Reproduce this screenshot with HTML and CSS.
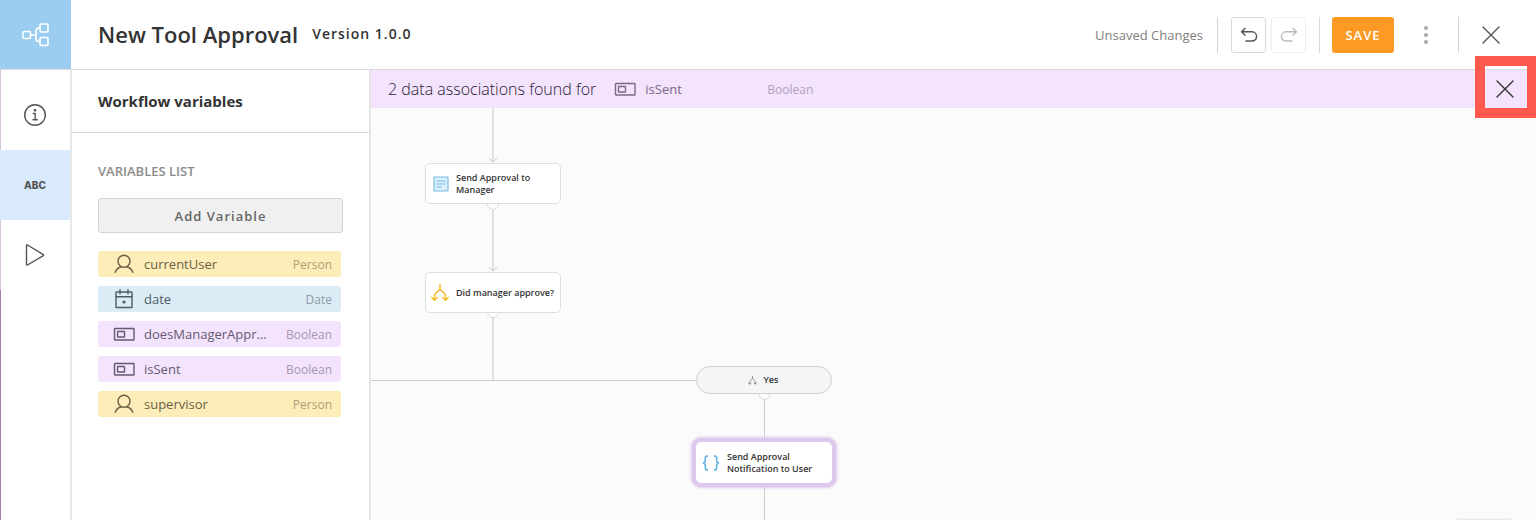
FILE: index.html
```html
<!DOCTYPE html>
<html lang="en">
<head>
    <meta charset="UTF-8">
    <meta name="viewport" content="width=device-width, initial-scale=1.0">
    <title>New Tool Approval</title>
    <link rel="stylesheet" href="styles.css">
</head>
<body>
    <!-- Shared icons -->
    <svg class="icon-defs" aria-hidden="true">
        <symbol id="icon-person" viewBox="0 0 20 20">
            <circle cx="10" cy="7.2" r="6"/>
            <path d="M1.2 18.3C2.4 15 4.8 13.4 7.4 12.8M18.8 18.3C17.6 15 15.2 13.4 12.6 12.8"/>
        </symbol>
        <symbol id="icon-date" viewBox="0 0 20 20">
            <rect x="2" y="3" width="16" height="15.5" rx="0.5"/>
            <path d="M2 7.7h16M6 0.8v4M14 0.8v4"/>
            <circle cx="10" cy="13" r="0.9" fill="currentColor"/>
        </symbol>
        <symbol id="icon-boolean" viewBox="0 0 22 14">
            <rect x="1.5" y="1.5" width="19.5" height="11.5" rx="0.5"/>
            <rect x="4.5" y="4.5" width="7" height="5.5" rx="0.5"/>
        </symbol>
        <symbol id="icon-close" viewBox="0 0 18 18">
            <path d="M1 1l16 16M17 1L1 17"/>
        </symbol>
        <symbol id="icon-split" viewBox="0 0 18 18">
            <path d="M9 0.5V5M9 5C8.5 7.5 3.5 7.5 3.5 12V16M9 5C9.5 7.5 14.5 7.5 14.5 12V16M0.7 13.3L3.5 16.5L6.3 13.3M11.7 13.3L14.5 16.5L17.3 13.3"/>
        </symbol>
    </svg>

    <header class="topbar">
        <a href="#" class="logo" aria-label="Workflows">
            <svg width="28" height="24" viewBox="0 0 28 24">
                <rect x="1" y="8.5" width="7.5" height="7" rx="1"/>
                <rect x="18" y="1" width="8" height="8" rx="1"/>
                <rect x="18" y="14.5" width="8" height="8" rx="1"/>
                <path d="M8.5 12H14M18 5H17C15 5 14 6 14 8V15.5C14 17.5 15 18.5 17 18.5H18"/>
            </svg>
        </a>
        <div class="title">
            <h1>New Tool Approval</h1>
            <span class="version">Version 1.0.0</span>
        </div>
        <div class="actions">
            <span class="status">Unsaved Changes</span>
            <div class="history">
                <button type="button" class="btn-icon" aria-label="Undo">
                    <svg width="18" height="16" viewBox="0 0 18 16"><path d="M5.5 1L1.5 4.8L5.5 8.6M1.5 4.8H12A4.6 4.6 0 0 1 12 14H5.5"/></svg>
                </button>
                <button type="button" class="btn-icon" aria-label="Redo" disabled>
                    <svg width="18" height="16" viewBox="0 0 18 16"><path d="M12.5 1L16.5 4.8L12.5 8.6M16.5 4.8H6A4.6 4.6 0 0 0 6 14H12.5"/></svg>
                </button>
            </div>
            <button type="button" class="btn-save">SAVE</button>
            <button type="button" class="btn-plain btn-more" aria-label="More">
                <svg width="6" height="20" viewBox="0 0 6 20"><circle cx="3" cy="3" r="2"/><circle cx="3" cy="10" r="2"/><circle cx="3" cy="17" r="2"/></svg>
            </button>
            <div class="close-wrap">
                <button type="button" class="btn-plain" aria-label="Close">
                    <svg class="icon" width="18" height="18"><use href="#icon-close"/></svg>
                </button>
            </div>
        </div>
    </header>

    <div class="workspace">
        <nav class="rail">
            <a href="#" aria-label="Info">
                <svg class="icon" width="24" height="24" viewBox="0 0 24 24">
                    <circle cx="12" cy="12" r="10.3"/>
                    <circle cx="12" cy="7.3" r="0.7" fill="currentColor"/>
                    <path d="M10.2 10.5H12.2V16.5M10 16.8H14.3"/>
                </svg>
            </a>
            <a href="#" class="active">ABC</a>
            <a href="#" aria-label="Run">
                <svg class="icon" width="20" height="24" viewBox="0 0 20 24"><path d="M1.5 2.5V21.5Q1.5 22.5 2.5 22L18.3 12.7Q19 12.2 18.3 11.7L2.5 2Q1.5 1.5 1.5 2.5Z"/></svg>
            </a>
        </nav>

        <aside class="panel">
            <h2>Workflow variables</h2>
            <div class="panel-body">
                <h3>VARIABLES LIST</h3>
                <button type="button" class="btn-add">Add Variable</button>
                <ul class="variables">
                    <li class="person">
                        <svg class="icon" width="20" height="20"><use href="#icon-person"/></svg>
                        <span class="name">currentUser</span>
                        <span class="type">Person</span>
                    </li>
                    <li class="date">
                        <svg class="icon" width="20" height="20"><use href="#icon-date"/></svg>
                        <span class="name">date</span>
                        <span class="type">Date</span>
                    </li>
                    <li class="boolean">
                        <svg class="icon" width="22" height="14"><use href="#icon-boolean"/></svg>
                        <span class="name">doesManagerAppr...</span>
                        <span class="type">Boolean</span>
                    </li>
                    <li class="boolean">
                        <svg class="icon" width="22" height="14"><use href="#icon-boolean"/></svg>
                        <span class="name">isSent</span>
                        <span class="type">Boolean</span>
                    </li>
                    <li class="person">
                        <svg class="icon" width="20" height="20"><use href="#icon-person"/></svg>
                        <span class="name">supervisor</span>
                        <span class="type">Person</span>
                    </li>
                </ul>
            </div>
        </aside>

        <main class="content">
            <div class="banner">
                <p>2 data associations found for</p>
                <svg class="icon" width="22" height="14"><use href="#icon-boolean"/></svg>
                <span class="name">isSent</span>
                <span class="type">Boolean</span>
                <button type="button" class="btn-plain" aria-label="Dismiss">
                    <svg class="icon" width="18" height="18"><use href="#icon-close"/></svg>
                </button>
                <div class="highlight"></div>
            </div>

            <div class="canvas">
                <!-- Connectors -->
                <svg class="links" width="600" height="412">
                    <path class="thick" d="M122 0V53M122 96V162M122 205V272"/>
                    <path class="arrow" d="M118 50L122 54L126 50M118 159L122 163L126 159"/>
                    <path d="M0 272.5H326M393.5 286V334M393.5 374V412"/>
                    <circle cx="122" cy="96" r="5.5"/>
                    <circle cx="122" cy="204" r="5.5"/>
                    <circle cx="393.5" cy="286" r="5.5"/>
                </svg>

                <div class="node node-form">
                    <svg width="16" height="16" viewBox="0 0 16 16">
                        <rect x="1" y="1" width="14" height="14" rx="0.5" fill="#d9effc" stroke="#7db8e2" stroke-width="1.2"/>
                        <path d="M3.5 5H12.5M3.5 8H12.5M3.5 11H8.5" stroke="#7db8e2"/>
                    </svg>
                    <span>Send Approval to Manager</span>
                </div>
                <div class="node node-decision">
                    <svg class="icon" width="18" height="18"><use href="#icon-split"/></svg>
                    <span>Did manager approve?</span>
                </div>
                <div class="node node-branch">
                    <svg class="icon" width="9" height="9"><use href="#icon-split"/></svg>
                    <span>Yes</span>
                </div>
                <div class="node node-script">
                    <svg width="18" height="16" viewBox="0 0 18 16">
                        <path d="M6 1.2H5Q3.3 1.2 3.3 3V5.5Q3.3 7.5 1 8Q3.3 8.5 3.3 10.5V13Q3.3 14.8 5 14.8H6M12 1.2H13Q14.7 1.2 14.7 3V5.5Q14.7 7.5 17 8Q14.7 8.5 14.7 10.5V13Q14.7 14.8 13 14.8H12" fill="none" stroke="#6cb4e4" stroke-width="1.7"/>
                    </svg>
                    <span>Send Approval Notification to User</span>
                </div>
                <div class="toolbar-shadow"></div>
            </div>
        </main>
    </div>
</body>
</html>
```
FILE: styles.css
```css
/* General Styles */
* {
    margin: 0;
    padding: 0;
    box-sizing: border-box;
}

body {
    display: flex;
    flex-direction: column;
    height: 100vh;
    overflow: hidden;
    font-family: 'Open Sans', 'Noto Sans', sans-serif;
    background: #fff;
    color: #333;
}

button {
    font-family: inherit;
    cursor: pointer;
}

a {
    color: inherit;
    text-decoration: none;
}

svg {
    display: block;
    flex: none;
}

.icon-defs {
    position: absolute;
    width: 0;
    height: 0;
}

.icon {
    fill: none;
    stroke: currentColor;
    stroke-width: 1.4px;
    stroke-linecap: round;
    stroke-linejoin: round;
}

/* Top Bar */
.topbar {
    display: flex;
    align-items: center;
    flex: none;
    height: 70px;
    border-bottom: 1px solid #dedbe0;
}

.logo {
    display: flex;
    align-items: center;
    justify-content: center;
    width: 71px;
    height: 100%;
    background: #9bcdf0;
}

.logo svg {
    fill: none;
    stroke: #fff;
    stroke-width: 1.6px;
}

.title {
    display: flex;
    align-items: center;
    gap: 14px;
    flex: 1;
    padding: 0 0 2px 27px;
}

.title h1 {
    font-size: 22px;
    font-weight: 600;
}

.version {
    font-size: 14px;
    font-weight: 600;
    letter-spacing: 1px;
}

.actions {
    display: flex;
    align-items: center;
    padding-right: 36px;
}

.status {
    padding-right: 14px;
    font-size: 13px;
    color: #808080;
}

.history {
    display: flex;
    gap: 5px;
    padding: 0 13px;
    margin-right: 12px;
    border-left: 1px solid #d4d4d4;
    border-right: 1px solid #d9d9d9;
}

.btn-icon {
    display: flex;
    align-items: center;
    justify-content: center;
    width: 35px;
    height: 36px;
    background: #fff;
    border: 1px solid #d9d9d9;
    border-radius: 3px;
    color: #555;
}

.btn-icon:disabled {
    border-color: #eee;
    color: #bbb;
    cursor: default;
}

.btn-icon svg {
    fill: none;
    stroke: currentColor;
    stroke-width: 1.4px;
    stroke-linejoin: round;
}

.btn-save {
    width: 62px;
    height: 36px;
    border: none;
    border-radius: 3px;
    background: #fc9a25;
    color: #fff;
    font-size: 13px;
    font-weight: 600;
    letter-spacing: 1px;
}

.btn-plain {
    display: flex;
    align-items: center;
    justify-content: center;
    border: none;
    background: none;
    color: #555;
}

.btn-more {
    width: 64px;
    height: 36px;
}

.btn-more svg {
    fill: #aaa;
}

.close-wrap {
    display: flex;
    height: 36px;
    padding-left: 23px;
    border-left: 1px solid #d4d4d4;
}

/* Side Rail */
.workspace {
    display: flex;
    flex: 1;
    min-height: 0;
}

.rail {
    flex: none;
    width: 72px;
    padding-top: 10px;
    border-right: 2px solid #e8e8e8;
    background: linear-gradient(#d9c3dc 220px, #a67fa8 220px) left / 1px 100% no-repeat;
}

.rail a {
    display: flex;
    align-items: center;
    justify-content: center;
    height: 70px;
    color: #555;
    font-family: Inter, sans-serif;
    font-size: 10px;
    font-weight: 800;
}

.rail .active {
    background: #d9eafc;
}

/* Variables Panel */
.panel {
    flex: none;
    width: 299px;
    border-right: 2px solid #e5e5e5;
}

.panel h2 {
    height: 63px;
    padding-left: 26px;
    border-bottom: 1px solid #d9d9d9;
    font-size: 15px;
    font-weight: 700;
    line-height: 62px;
}

.panel-body {
    padding: 29px 26px 0;
}

.panel h3 {
    margin-bottom: 17px;
    font-size: 13px;
    font-weight: 600;
    line-height: 19px;
    color: #8c8c8c;
}

.btn-add {
    width: 100%;
    height: 35px;
    margin-bottom: 18px;
    border: 1px solid #d4d4d4;
    border-radius: 3px;
    background: #f0f0f0;
    color: #666;
    font-size: 13px;
    font-weight: 600;
    letter-spacing: 1px;
}

.variables {
    display: grid;
    gap: 9px;
    margin-right: 2px;
    list-style: none;
}

.variables li {
    display: grid;
    grid-template-columns: 22px 1fr auto;
    align-items: center;
    justify-items: start;
    gap: 9px;
    height: 26px;
    padding: 0 9px 0 15px;
    border-radius: 3px;
}

.variables .icon {
    justify-self: center;
}

.person {
    background: #fdedb9;
    color: #6b6145;
}

.date {
    background: #dbecf6;
    color: #4f5d66;
}

.boolean {
    background: #f3e3fc;
    color: #665a70;
}

.name {
    font-size: 13px;
}

.type {
    font-size: 12px;
    opacity: 0.55;
}

/* Associations Banner */
.content {
    display: flex;
    flex-direction: column;
    flex: 1;
    min-width: 0;
}

.banner {
    position: relative;
    z-index: 1;
    display: flex;
    align-items: center;
    flex: none;
    height: 38px;
    padding: 0 22px 0 17px;
    background: #f3e3fc;
    color: #7b6a85;
}

.banner p {
    margin-right: 18px;
    font-size: 16px;
    font-weight: 300;
    color: #2a2033;
}

.banner .name {
    width: 122px;
    margin-left: 9px;
}

.banner .btn-plain {
    margin-left: auto;
    color: #333;
}

.highlight {
    position: absolute;
    top: -14px;
    right: 0;
    width: 61px;
    height: 62px;
    border: 10px solid #ff5a4d;
    border-right-width: 9px;
    pointer-events: none;
}

/* Workflow Canvas */
.canvas {
    position: relative;
    flex: 1;
    overflow: hidden;
    background: #fbfbfb;
}

.links {
    position: absolute;
    top: 0;
    left: 0;
    fill: none;
    stroke: #ccc;
}

.links .thick {
    stroke: #e0e0e0;
    stroke-width: 2px;
}

.links .arrow {
    stroke: #c8c8c8;
}

.links circle {
    fill: #fff;
    stroke: #d9d9d9;
}

.node {
    position: absolute;
    display: flex;
    align-items: center;
    gap: 7px;
    width: 136px;
    height: 41px;
    padding: 0 7px 0 5px;
    border: 1px solid #dedede;
    border-radius: 5px;
    background: #fff;
    font-size: 9px;
    font-weight: 600;
    line-height: 12px;
}

.node-form {
    top: 55px;
    left: 54px;
    padding: 0 24px 0 7px;
}

.node-decision {
    top: 164px;
    left: 54px;
    padding-right: 0;
    white-space: nowrap;
}

.node-decision .icon {
    color: #f6bd2c;
}

.node-branch {
    top: 258px;
    left: 325px;
    height: 28px;
    justify-content: center;
    border-color: #d0d0d0;
    border-radius: 14px;
    background: #f5f5f5;
}

.node-branch .icon {
    color: #777;
}

.node-script {
    top: 334px;
    left: 325px;
    border-color: #fff;
    box-shadow: 0 0 0 4px #dcc8ee, 0 0 3px 5px #dcc8ee;
}

.toolbar-shadow {
    position: absolute;
    right: 24px;
    bottom: -10px;
    width: 56px;
    height: 10px;
    box-shadow: 0 0 3px rgba(0, 0, 0, 0.2);
}
```
